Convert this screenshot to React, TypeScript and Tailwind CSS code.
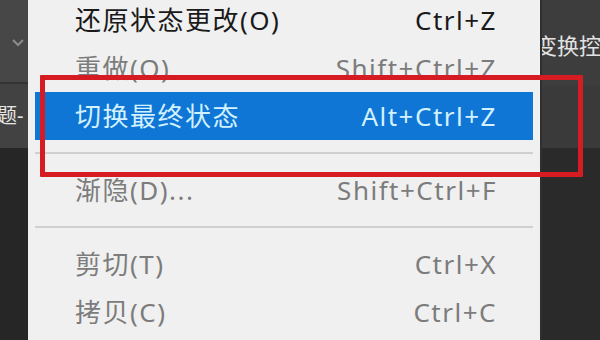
import React from 'react';

type Item =
  | { kind: 'item'; label: string; shortcut: string; disabled?: boolean; active?: boolean }
  | { kind: 'sep' };

const items: Item[] = [
  { kind: 'item', label: '还原状态更改(O)', shortcut: 'Ctrl+Z' },
  { kind: 'item', label: '重做(O)', shortcut: 'Shift+Ctrl+Z', disabled: true },
  { kind: 'item', label: '切换最终状态', shortcut: 'Alt+Ctrl+Z', active: true },
  { kind: 'sep' },
  { kind: 'item', label: '渐隐(D)...', shortcut: 'Shift+Ctrl+F', disabled: true },
  { kind: 'sep' },
  { kind: 'item', label: '剪切(T)', shortcut: 'Ctrl+X', disabled: true },
  { kind: 'item', label: '拷贝(C)', shortcut: 'Ctrl+C', disabled: true },
];

function MenuRow({ item }: { item: Item }) {
  if (item.kind === 'sep') {
    return (
      <div className="h-[26px] flex items-center">
        <div className="w-full h-[2px] bg-[#cfcfcf]" />
      </div>
    );
  }

  const color = item.active
    ? 'text-[#d2f1ff] bg-[#0f76d6]'
    : item.disabled
      ? 'text-[#7c7c7c]'
      : 'text-[#1a1a1a]';

  return (
    <div className={`h-[48px] flex items-center justify-between pl-[40px] pr-[36px] ${color}`}>
      <span>{item.label}</span>
      <span>{item.shortcut}</span>
    </div>
  );
}

export default function App() {
  return (
    <div
      className="relative w-[600px] h-[340px] overflow-hidden flex bg-[#282828]"
      style={{ fontFamily: '"Noto Sans", "Noto Sans CJK SC", sans-serif' }}
    >
      {/* Left panel strip */}
      <div className="w-[28px] shrink-0 flex flex-col overflow-hidden">
        <div className="h-[84px] bg-[#474747] flex items-center justify-end pr-[3px] border-b-2 border-[#333]">
          <svg width="14" height="10" viewBox="0 0 14 10" className="mb-[-4px]">
            <path d="M2 2 L7 7 L12 2" fill="none" stroke="#8c8c8c" strokeWidth="2" />
          </svg>
        </div>
        <div className="h-[64px] bg-[#424242] flex items-center">
          <span className="-ml-[3px] text-[20px] text-[#e6e6e6] whitespace-nowrap">题-</span>
        </div>
        <div className="flex-1 bg-[#262626]" />
      </div>

      {/* Context menu */}
      <div className="w-[512px] shrink-0 bg-[#f0f0f0] px-[7px] text-[26px] tracking-[1.5px] leading-none">
        <div className="-mt-[4px]">
          {items.map((it, i) => (
            <MenuRow key={i} item={it} />
          ))}
        </div>
      </div>

      {/* Right panel strip */}
      <div className="flex-1 flex flex-col overflow-hidden border-l-2 border-[#2f2f2f]">
        <div className="h-[86px] bg-[#3d3d3d] flex items-center pt-[4px]">
          <span className="-ml-[7px] text-[22px] text-[#e3e3e3] whitespace-nowrap">变换控件</span>
        </div>
        <div className="h-[62px] bg-[#3a3a3a]" />
        <div className="flex-1 bg-[#2a2a2a]" />
      </div>

      {/* Red annotation box */}
      <div className="absolute left-[40px] top-[75px] w-[543px] h-[102px] border-[5px] border-[#d41c22] rounded-[1px]" />
    </div>
  );
}
